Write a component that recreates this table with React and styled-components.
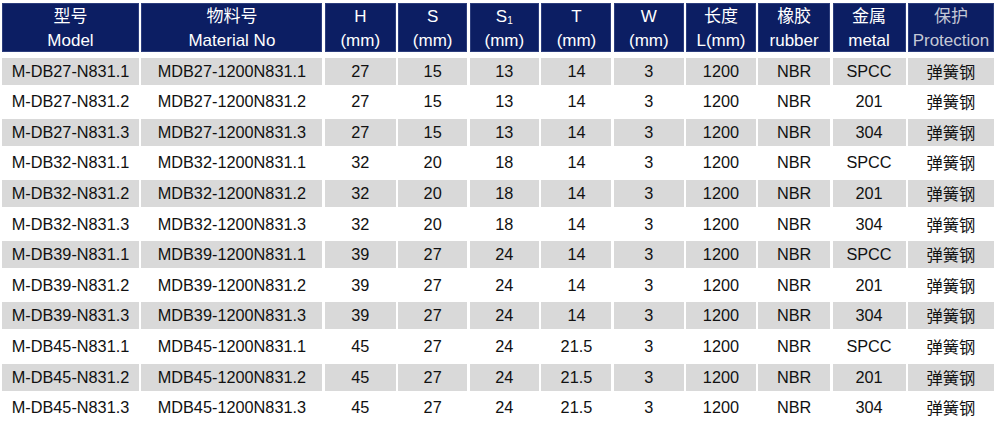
import React from "react";
import styled, { createGlobalStyle } from "styled-components";

const Global = createGlobalStyle`
  html, body { margin: 0; padding: 0; background: #ffffff; }
  body { font-family: "Liberation Sans", Arial, "Noto Sans CJK SC", sans-serif; }
`;

const Table = styled.div`
  display: grid;
  grid-template-columns: 137px 181px 71px 69px 69.5px 70px 70px 69.5px 72px 73px 86px;
  grid-template-rows: 51px;
  grid-auto-rows: 27px;
  column-gap: 2.4px;
  row-gap: 3.6px;
  padding: 3px 0 0 2px;
  width: 1000px;
  box-sizing: border-box;
`;

const HeadCell = styled.div`
  align-self: start;
  height: 49px;
  background: #0c1e63;
  box-shadow: inset 0 0 0 1px #2c3d7c;
  color: ${(p) => (p.$muted ? "#c4c8d6" : "#ffffff")};
  font-size: 17px;
  line-height: 24px;
  text-align: center;
  display: flex;
  flex-direction: column;
  justify-content: center;
  padding-top: 3px;
  box-sizing: border-box;
  white-space: nowrap;
`;

const Line = styled.span`
  display: block;
`;

const Sub = styled.sub`
  font-size: 10px;
  vertical-align: -2px;
  line-height: 0;
`;

const Cell = styled.div`
  background: ${(p) => (p.$shade ? "#d9d9d9" : "#ffffff")};
  color: #111111;
  font-size: 16.3px;
  line-height: 27px;
  text-align: center;
  white-space: nowrap;
  font-family: ${(p) =>
    p.$cjk
      ? '"Noto Sans CJK SC", "Liberation Sans", sans-serif'
      : '"Liberation Sans", Arial, sans-serif'};
`;

const headers = [
  ["型号", "Model"],
  ["物料号", "Material No"],
  ["H", "(mm)"],
  ["S", "(mm)"],
  [
    <>
      S<Sub>1</Sub>
    </>,
    "(mm)",
  ],
  ["T", "(mm)"],
  ["W", "(mm)"],
  ["长度", "L(mm)"],
  ["橡胶", "rubber"],
  ["金属", "metal"],
  ["保护", "Protection"],
];

const groups = [
  { n: "27", s: "15", s1: "13", t: "14" },
  { n: "32", s: "20", s1: "18", t: "14" },
  { n: "39", s: "27", s1: "24", t: "14" },
  { n: "45", s: "27", s1: "24", t: "21.5" },
];
const metals = ["SPCC", "201", "304"];

const rows = [];
groups.forEach((g) => {
  metals.forEach((m, i) => {
    const k = i + 1;
    rows.push([
      `M-DB${g.n}-N831.${k}`,
      `MDB${g.n}-1200N831.${k}`,
      g.n,
      g.s,
      g.s1,
      g.t,
      "3",
      "1200",
      "NBR",
      m,
      "弹簧钢",
    ]);
  });
});

export default function App() {
  return (
    <>
      <Global />
      <Table>
        {headers.map((h, i) => (
          <HeadCell key={`h${i}`} $muted={i === 10}>
            <Line>{h[0]}</Line>
            <Line>{h[1]}</Line>
          </HeadCell>
        ))}
        {rows.map((r, ri) =>
          r.map((c, ci) => (
            <Cell key={`${ri}-${ci}`} $shade={ri % 2 === 0} $cjk={ci === 10}>
              {c}
            </Cell>
          ))
        )}
      </Table>
    </>
  );
}
